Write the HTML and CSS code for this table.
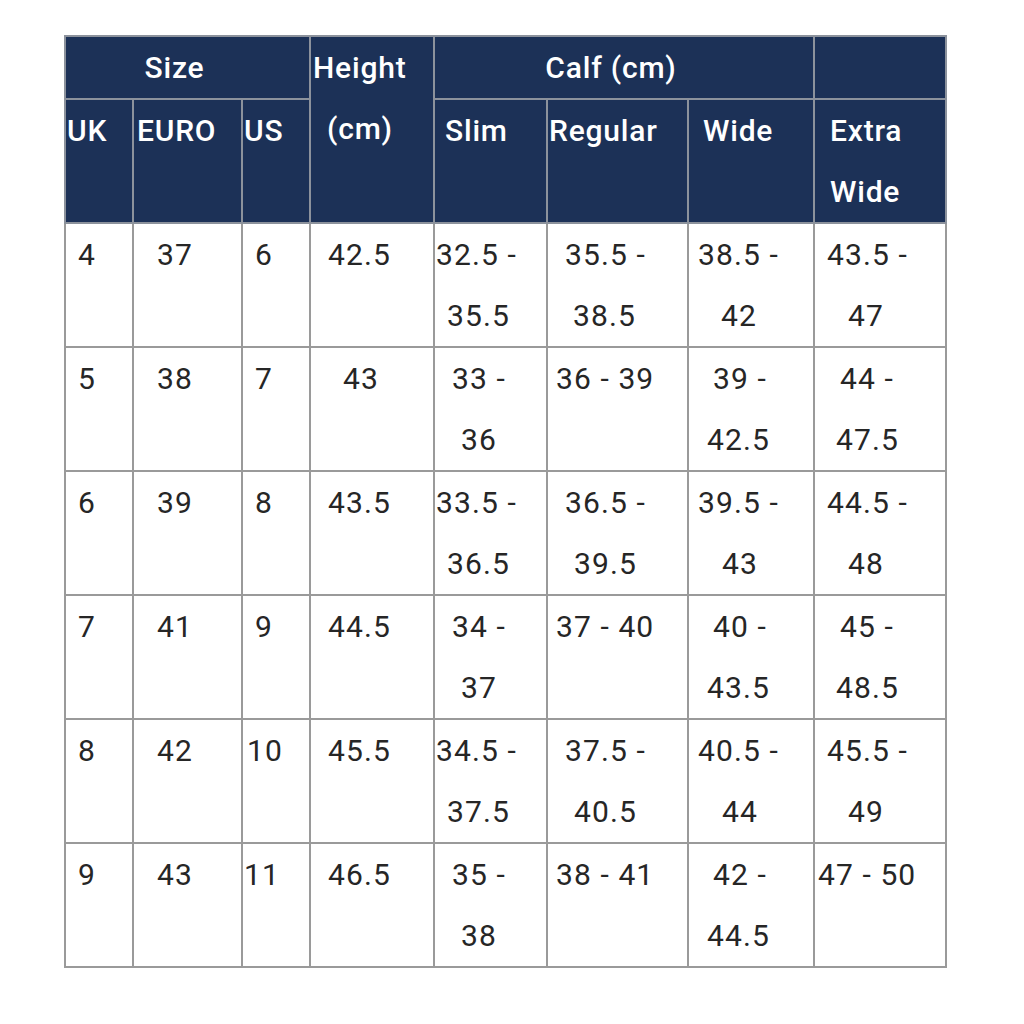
FILE: index.html
```html
<!DOCTYPE html>
<html lang="en">
<head>
<meta charset="utf-8">
<title>Size chart</title>
<link rel="stylesheet" href="styles.css">
</head>
<body>
<div class="page">
<table class="chart">
  <colgroup>
    <col class="c-uk"><col class="c-euro"><col class="c-us"><col class="c-height">
    <col class="c-slim"><col class="c-regular"><col class="c-wide"><col class="c-extra">
  </colgroup>
  <thead>
    <tr>
      <th colspan="3" class="grp">Size</th>
      <th rowspan="2"><span class="ln p1">Height</span><span class="ln p15">(cm)</span></th>
      <th colspan="3" class="grp">Calf (cm)</th>
      <th></th>
    </tr>
    <tr>
      <th><span class="ln p0">UK</span></th>
      <th><span class="ln p2">EURO</span></th>
      <th><span class="ln p0">US</span></th>
      <th><span class="ln p9">Slim</span></th>
      <th><span class="ln p0">Regular</span></th>
      <th><span class="ln p13">Wide</span></th>
      <th><span class="ln p14">Extra</span><span class="ln p14">Wide</span></th>
    </tr>
  </thead>
  <tbody>
    <tr>
      <td><span class="ln p11">4</span></td>
      <td><span class="ln p22">37</span></td>
      <td><span class="ln p11">6</span></td>
      <td><span class="ln p16">42.5</span></td>
      <td><span class="ln p0">32.5 -</span><span class="ln p11">35.5</span></td>
      <td><span class="ln p16">35.5 -</span><span class="ln p24">38.5</span></td>
      <td><span class="ln p8">38.5 -</span><span class="ln p31">42</span></td>
      <td><span class="ln p11">43.5 -</span><span class="ln p32">47</span></td>
    </tr>
    <tr>
      <td><span class="ln p11">5</span></td>
      <td><span class="ln p22">38</span></td>
      <td><span class="ln p11">7</span></td>
      <td><span class="ln p31">43</span></td>
      <td><span class="ln p16">33 -</span><span class="ln p25">36</span></td>
      <td><span class="ln p7">36 - 39</span></td>
      <td><span class="ln p23">39 -</span><span class="ln p17">42.5</span></td>
      <td><span class="ln p24">44 -</span><span class="ln p20">47.5</span></td>
    </tr>
    <tr>
      <td><span class="ln p11">6</span></td>
      <td><span class="ln p22">39</span></td>
      <td><span class="ln p11">8</span></td>
      <td><span class="ln p16">43.5</span></td>
      <td><span class="ln p0">33.5 -</span><span class="ln p11">36.5</span></td>
      <td><span class="ln p16">36.5 -</span><span class="ln p25">39.5</span></td>
      <td><span class="ln p8">39.5 -</span><span class="ln p32">43</span></td>
      <td><span class="ln p11">44.5 -</span><span class="ln p32">48</span></td>
    </tr>
    <tr>
      <td><span class="ln p11">7</span></td>
      <td><span class="ln p22">41</span></td>
      <td><span class="ln p11">9</span></td>
      <td><span class="ln p16">44.5</span></td>
      <td><span class="ln p16">34 -</span><span class="ln p25">37</span></td>
      <td><span class="ln p7">37 - 40</span></td>
      <td><span class="ln p23">40 -</span><span class="ln p17">43.5</span></td>
      <td><span class="ln p24">45 -</span><span class="ln p20">48.5</span></td>
    </tr>
    <tr>
      <td><span class="ln p11">8</span></td>
      <td><span class="ln p22">42</span></td>
      <td><span class="ln p3">10</span></td>
      <td><span class="ln p16">45.5</span></td>
      <td><span class="ln p0">34.5 -</span><span class="ln p11">37.5</span></td>
      <td><span class="ln p16">37.5 -</span><span class="ln p25">40.5</span></td>
      <td><span class="ln p8">40.5 -</span><span class="ln p32">44</span></td>
      <td><span class="ln p11">45.5 -</span><span class="ln p32">49</span></td>
    </tr>
    <tr>
      <td><span class="ln p11">9</span></td>
      <td><span class="ln p22">43</span></td>
      <td><span class="ln p0">11</span></td>
      <td><span class="ln p16">46.5</span></td>
      <td><span class="ln p16">35 -</span><span class="ln p25">38</span></td>
      <td><span class="ln p7">38 - 41</span></td>
      <td><span class="ln p23">42 -</span><span class="ln p17">44.5</span></td>
      <td><span class="ln p2">47 - 50</span></td>
    </tr>
  </tbody>
</table>
</div>
</body>
</html>
```

FILE: styles.css
```css
html, body {
  margin: 0;
  padding: 0;
  background: #ffffff;
}

.page {
  padding: 35px 0 0 64px;
}

.chart {
  border-collapse: collapse;
  table-layout: fixed;
  width: 883px;
  font-family: Roboto, "Liberation Sans", Arial, sans-serif;
  font-size: 30px;
  line-height: 61px;
  letter-spacing: 1.1px;
  color: #262626;
}

.c-uk { width: 68px; }
.c-euro { width: 109px; }
.c-us { width: 68px; }
.c-height { width: 124px; }
.c-slim { width: 113px; }
.c-regular { width: 141px; }
.c-wide { width: 126px; }
.c-extra { width: 132px; }

.chart th,
.chart td {
  border: 2px solid #9a9a9a;
  padding: 0 0 0 1px;
  text-align: left;
  vertical-align: top;
  white-space: nowrap;
}

.chart th {
  background: #1c3157;
  color: #ffffff;
  font-weight: 500;
  letter-spacing: 0.8px;
  border-color: #8c929c;
}

.chart th.grp {
  text-align: center;
  padding: 0 26px 0 0;
}

.ln { display: block; }

.p0 { padding-left: 0; }
.p1 { padding-left: 1px; }
.p2 { padding-left: 2px; }
.p3 { padding-left: 3px; }
.p7 { padding-left: 7px; }
.p8 { padding-left: 8px; }
.p9 { padding-left: 9px; }
.p11 { padding-left: 11px; }
.p13 { padding-left: 13px; }
.p14 { padding-left: 14px; }
.p15 { padding-left: 15px; }
.p16 { padding-left: 16px; }
.p17 { padding-left: 17px; }
.p20 { padding-left: 20px; }
.p22 { padding-left: 22px; }
.p23 { padding-left: 23px; }
.p24 { padding-left: 24px; }
.p25 { padding-left: 25px; }
.p31 { padding-left: 31px; }
.p32 { padding-left: 32px; }
```
